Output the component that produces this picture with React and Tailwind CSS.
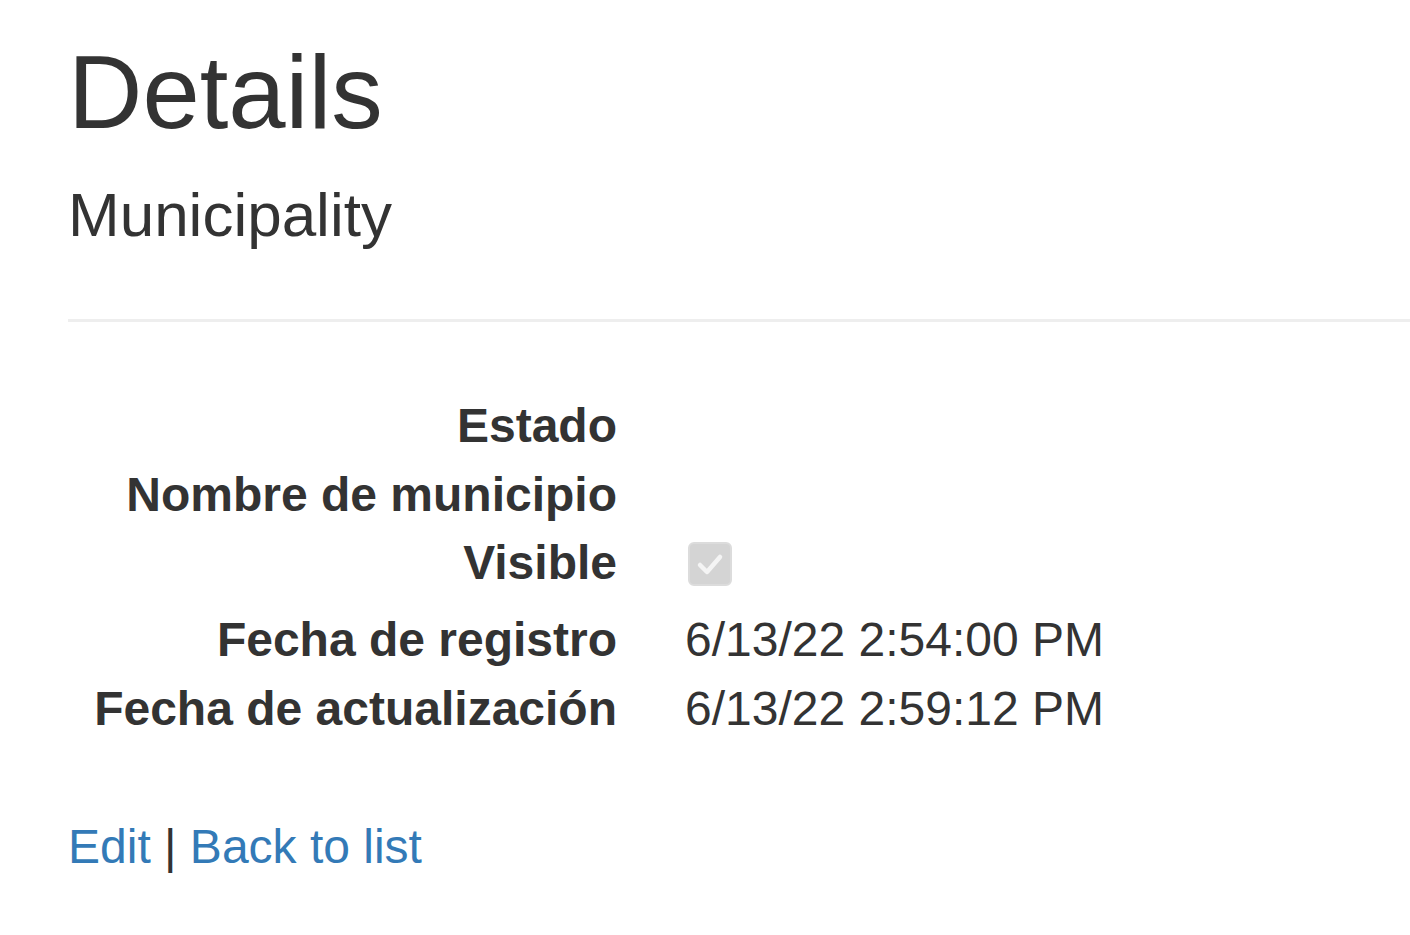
export default function App() {
  const rows = [
    { label: "Estado", value: null, h: "h-[69px]" },
    { label: "Nombre de municipio", value: null, h: "h-[68px]" },
    { label: "Visible", value: "check", h: "h-[77px]" },
    { label: "Fecha de registro", value: "6/13/22 2:54:00 PM", h: "h-[69px]" },
    { label: "Fecha de actualización", value: "6/13/22 2:59:12 PM", h: "h-[69px]" },
  ];
  return (
    <div className="w-[1410px] h-[935px] overflow-hidden bg-white text-[#333] font-['Liberation_Sans',Arial,sans-serif]">
      <div className="pl-[68px] pt-[36px]">
        <h2 className="text-[103px] leading-[113px] font-normal m-0">Details</h2>
        <h4 className="text-[62px] leading-[68px] font-normal mt-[32px]">Municipality</h4>
        <div className="mt-[70px] h-[3px] bg-[#eee] w-[1400px]" />
        <div className="mt-[69px]">
          {rows.map((r) => (
            <div key={r.label} className={`flex ${r.h}`}>
              <div className="w-[549px] shrink-0 text-right font-bold text-[48px] leading-[69px] whitespace-nowrap">
                {r.label}
              </div>
              <div className="ml-[68px] text-[48px] leading-[69px] whitespace-nowrap">
                {r.value === "check" ? (
                  <div className="mt-[14px] w-[44px] h-[44px] rounded-[6px] bg-[#d4d4d4] border-[2px] border-[#dcdcdc] flex items-center justify-center ml-[3px]">
                    <svg width="32" height="32" viewBox="0 0 32 32">
                      <path d="M6 17 L13 24 L26 9" fill="none" stroke="#f4f4f4" strokeWidth="4.5" strokeLinecap="round" strokeLinejoin="round" />
                    </svg>
                  </div>
                ) : (
                  r.value
                )}
              </div>
            </div>
          ))}
        </div>
        <p className="mt-[69px] text-[48px] leading-[69px]">
          <a className="text-[#337ab7]">Edit</a> | <a className="text-[#337ab7]">Back to list</a>
        </p>
      </div>
    </div>
  );
}
